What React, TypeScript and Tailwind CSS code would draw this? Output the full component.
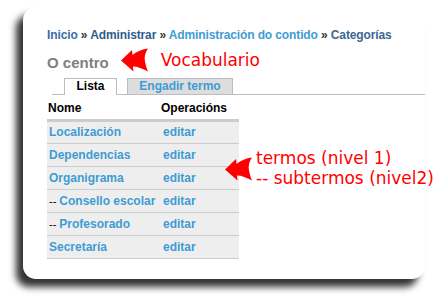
import React from 'react';

interface Termo {
  nome: string;
  nivel: number;
}

const termos: Termo[] = [
  { nome: 'Localización', nivel: 1 },
  { nome: 'Dependencias', nivel: 1 },
  { nome: 'Organigrama', nivel: 1 },
  { nome: 'Consello escolar', nivel: 2 },
  { nome: 'Profesorado', nivel: 2 },
  { nome: 'Secretaría', nivel: 1 },
];

// frecha vermella dos comentarios
const Frecha = ({ className }: { className?: string }) => (
  <svg className={className} viewBox="0 0 27 24" width="27" height="24">
    <path
      d="M0 12.5 L11 2 L11.5 7 C16 3.5 21 1.2 27 0.5 C24 5 23 9 24 13.5 C24.8 17.5 25.8 20.5 27 23.5 C21.5 20.5 16.5 18.5 12 18.5 L12.5 23.5 Z"
      fill="#ff0000"
    />
  </svg>
);

const App = () => {
  return (
    <div className="w-[433px] h-[304px] bg-white pt-[7px] pl-[23px] font-['Liberation_Sans',Arial,sans-serif]">
      <div className="relative w-[402px] h-[272px] rounded-[13px] bg-white shadow-[-7px_8px_7px_rgba(0,0,0,0.8)] pl-[24px] pt-[20px]">
        {/* Migas */}
        <div className="text-[12px] font-bold leading-[16px] tracking-[-0.12px] text-[#333] whitespace-nowrap">
          <span className="text-[#3a6ea6]">Inicio</span> »{' '}
          <span className="text-[#2f5d8b]">Administrar</span> »{' '}
          <span className="text-[#3e9cd4]">Administración do contido</span> »{' '}
          <span className="text-[#3c6794]">Categorías</span>
        </div>

        {/* Título */}
        <div className="flex items-center mt-[3px] h-[26px]">
          <h1 className="text-[15px] font-bold leading-[20px] text-[#808080] mt-[8px]">O centro</h1>
          <Frecha className="ml-[12px] mt-[1px]" />
          <span className="ml-[13px] text-[17px] leading-[20px] text-[#ff0000] font-['DejaVu_Sans',sans-serif] mt-[1px] whitespace-nowrap">
            Vocabulario
          </span>
        </div>

        {/* Pestanas */}
        <div className="ml-[5px] mt-[6px] flex gap-[10px] pl-[12px] border-b border-[#bdbdbd] h-[17px]">
          <div className="w-[53px] h-[17px] bg-white border border-b-0 border-[#bdbdbd] text-center text-[12px] font-bold leading-[15px] text-black">
            Lista
          </div>
          <div className="w-[106px] h-[16px] bg-[#dddddd] border border-b-0 border-[#bdbdbd] text-center text-[12px] font-bold leading-[15px] text-[#3e9cd4]">
            Engadir termo
          </div>
        </div>

        {/* Táboa */}
        <table className="mt-[2px] w-[192px] border-collapse text-[12px] font-bold">
          <thead>
            <tr className="border-b-[3px] border-[#cccccc]">
              <th className="text-left px-[1px] h-[23px] text-black w-[114px]">Nome</th>
              <th className="text-left px-[0px] text-black">Operacións</th>
            </tr>
          </thead>
          <tbody>
            {termos.map((t) => (
              <tr key={t.nome} className="bg-[#eeeeee] border-b border-[#cccccc] h-[23px]">
                <td className="pl-[2px] whitespace-nowrap text-[#3e9cd4]">
                  {t.nivel > 1 && <span className="text-black font-normal text-[11px] mr-[3px]">--</span>}
                  {t.nome}
                </td>
                <td className="pl-[2px] text-[#3e9cd4]">editar</td>
              </tr>
            ))}
          </tbody>
        </table>

        {/* Nota sobre os niveis */}
        <div className="absolute left-[202px] top-[141px] flex items-start">
          <Frecha className="mt-[9px]" />
          <div className="ml-[4px] text-[17px] leading-[20px] text-[#ff0000] font-['DejaVu_Sans',sans-serif] whitespace-nowrap">
            <div>termos (nivel 1)</div>
            <div>-- subtermos (nivel2)</div>
          </div>
        </div>
      </div>
    </div>
  );
};

export default App;
